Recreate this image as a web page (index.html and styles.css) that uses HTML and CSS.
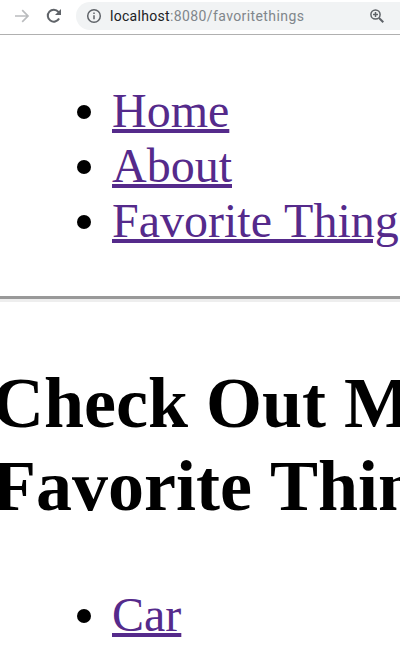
FILE: index.html
```
<!DOCTYPE html>
<html lang="en">
<head>
<meta charset="utf-8">
<title>Favorite Things</title>
<link rel="stylesheet" href="styles.css">
</head>
<body>
<header class="toolbar">
  <svg class="forward" width="16" height="16" viewBox="0 0 16 16"><path d="M1 8h13M8.2 2.2 14 8l-5.8 5.8"/></svg>
  <svg class="reload" width="16" height="16" viewBox="0 0 16 16"><path d="M13.1 10.5A6 6 0 1 1 12.4 3.8L14 5.4"/><path class="tip" d="M15 1v6H9z"/></svg>
  <div class="address">
    <svg class="info" width="16" height="16" viewBox="0 0 16 16"><circle cx="8" cy="8" r="6.3"/><path d="M8 7.2v4.1M8 4.5v1.6"/></svg>
    <span class="url"><span class="host">localhost</span>:8080/favoritethings</span>
    <svg class="zoom" width="16" height="16" viewBox="0 0 16 16"><circle cx="6.5" cy="6.5" r="4.6"/><path d="M6.5 4v5M4 6.5h5"/><path class="handle" d="m10 10 4.3 4.3"/></svg>
  </div>
</header>
<main class="page">
  <ul class="links nav">
    <li><a href="#">Home</a></li>
    <li><a href="#">About</a></li>
    <li><a href="#">Favorite Thing</a></li>
  </ul>
  <hr class="rule">
  <h1 class="title">Check Out M<br><span class="second">Favorite Thin</span></h1>
  <ul class="links">
    <li><a href="#">Car</a></li>
  </ul>
</main>
</body>
</html>
```
FILE: styles.css
```
html, body {
  margin: 0;
  height: 650px;
  overflow: hidden;
  background: #fff;
}
.toolbar {
  display: flex;
  align-items: center;
  box-sizing: border-box;
  height: 35px;
  padding: 0 0 3px 14px;
  border-bottom: 1px solid #b0b0b0;
}
svg {
  flex: none;
  fill: none;
  stroke: #5f6368;
  stroke-width: 1.5;
}
.forward {
  stroke: #babcbe;
  stroke-width: 1.7;
}
.reload {
  margin-left: 16px;
  stroke-width: 2;
}
.reload .tip {
  fill: #5f6368;
  stroke: none;
}
.address {
  display: flex;
  flex: 1;
  align-items: center;
  height: 28px;
  margin-left: 14px;
  padding: 0 15px 0 10px;
  border-radius: 14px 0 0 14px;
  background: #f1f3f4;
}
.info {
  margin-right: 8px;
}
.url {
  flex: 1;
  font: 14px/28px Roboto, sans-serif;
  letter-spacing: 0.4px;
  color: #80868b;
  white-space: nowrap;
}
.host {
  letter-spacing: 0.3px;
  color: #202124;
}
.zoom .handle {
  stroke-width: 2;
}
.page {
  font-family: "Liberation Serif", serif;
  font-size: 48px;
  line-height: 55px;
}
.links {
  margin: 0;
  padding: 0 0 0 77px;
  list-style: none;
}
.nav {
  padding-top: 48px;
}
.links li {
  display: flex;
  align-items: center;
  white-space: nowrap;
}
.links li::before {
  content: "";
  flex: none;
  width: 14px;
  height: 14px;
  margin: 3px 21px 0 0;
  border-radius: 50%;
  background: #000;
}
.links a {
  color: #552a8b;
  text-decoration-thickness: 4px;
  text-underline-offset: 2px;
  word-spacing: 1px;
}
.rule {
  height: 3px;
  margin: 48px 0 0;
  border: 0;
  border-top: 3px solid #999;
  background: #eee;
}
.title {
  margin: 60px 0 59px -8px;
  font-size: 72px;
  line-height: 83px;
  white-space: nowrap;
}
.second {
  word-spacing: 1.4px;
}
```
